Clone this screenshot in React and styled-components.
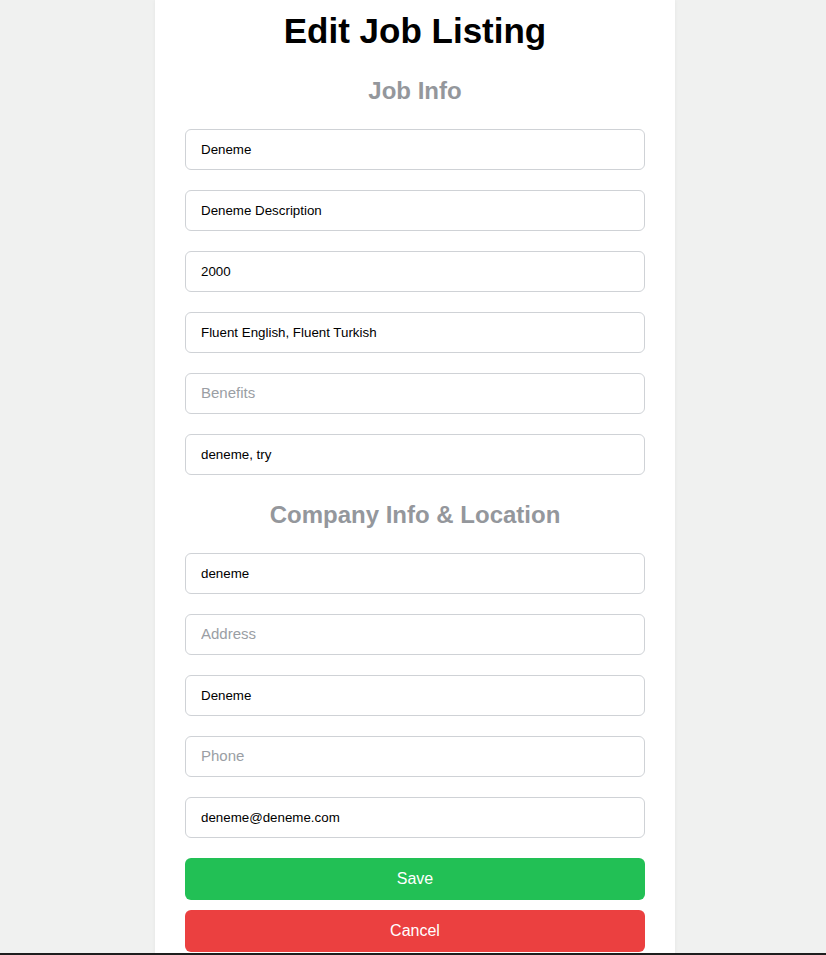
import React, { useState } from 'react';
import styled, { createGlobalStyle } from 'styled-components';

const GlobalStyle = createGlobalStyle`
  html, body {
    margin: 0;
    padding: 0;
    background: #f0f1f0;
    font-family: 'Liberation Sans', Arial, sans-serif;
  }
`;

const jobFields = [
  { name: 'title', placeholder: 'Job Title', value: 'Deneme' },
  { name: 'description', placeholder: 'Description', value: 'Deneme Description' },
  { name: 'salary', placeholder: 'Salary', value: '2000' },
  { name: 'requirements', placeholder: 'Requirements', value: 'Fluent English, Fluent Turkish' },
  { name: 'benefits', placeholder: 'Benefits', value: '' },
  { name: 'tags', placeholder: 'Tags', value: 'deneme, try' },
];

const companyFields = [
  { name: 'company', placeholder: 'Company Name', value: 'deneme' },
  { name: 'address', placeholder: 'Address', value: '' },
  { name: 'city', placeholder: 'City', value: 'Deneme' },
  { name: 'phone', placeholder: 'Phone', value: '' },
  { name: 'email', placeholder: 'Email', value: 'deneme@deneme.com' },
];

const App = () => {
  const [form, setForm] = useState(() =>
    [...jobFields, ...companyFields].reduce((acc, f) => ({ ...acc, [f.name]: f.value }), {})
  );

  const handleChange = (e) => {
    setForm({ ...form, [e.target.name]: e.target.value });
  };

  const renderField = (field) => (
    <Input
      key={field.name}
      name={field.name}
      placeholder={field.placeholder}
      value={form[field.name]}
      onChange={handleChange}
    />
  );

  return (
    <Screen>
      <GlobalStyle />
      <Page>
        <Card>
          <Title>Edit Job Listing</Title>
          <SectionTitle>Job Info</SectionTitle>
          {jobFields.map(renderField)}
          <SectionTitle $spaced>Company Info &amp; Location</SectionTitle>
          {companyFields.map(renderField)}
          <Actions>
            <Button type="button" $variant="save">Save</Button>
            <Button type="button" $variant="cancel">Cancel</Button>
          </Actions>
        </Card>
      </Page>
      <BottomBar />
    </Screen>
  );
};

export default App;

const Screen = styled.div`
  display: flex;
  flex-direction: column;
  height: 955px;
  overflow: hidden;
`;

const Page = styled.main`
  flex: 1;
  display: flex;
  justify-content: center;
  padding-left: 4px;
  overflow: hidden;
`;

const Card = styled.form`
  width: 520px;
  box-sizing: border-box;
  padding: 9px 30px 20px;
  background: #ffffff;
  box-shadow: 0 0 4px rgba(0, 0, 0, 0.05);
  display: flex;
  flex-direction: column;
  align-self: flex-start;
`;

const Title = styled.h1`
  margin: 0 0 25px;
  font-size: 35px;
  line-height: 43px;
  font-weight: 700;
  color: #000;
  text-align: center;
`;

const SectionTitle = styled.h2`
  margin: ${({ $spaced }) => ($spaced ? '6px' : '0')} 0 24px;
  font-size: 24px;
  line-height: 28px;
  font-weight: 700;
  color: #94979c;
  text-align: center;
`;

const Input = styled.input`
  box-sizing: border-box;
  width: 100%;
  height: 41px;
  margin: 0 0 20px;
  padding: 0 15px;
  border: 1px solid #cfd2d6;
  border-radius: 6px;
  font-family: 'Liberation Sans', Arial, sans-serif;
  font-size: 13.33px;
  color: #000;
  background: #fff;
  outline: none;

  &::placeholder {
    font-size: 15px;
    color: #9a9ea4;
  }
`;

const Actions = styled.div`
  display: flex;
  flex-direction: column;
  gap: 10px;
`;

const Button = styled.button`
  height: 42px;
  width: 100%;
  border: none;
  border-radius: 6px;
  font-family: 'Liberation Sans', Arial, sans-serif;
  font-size: 16px;
  color: #fff;
  cursor: pointer;
  background: ${({ $variant }) => ($variant === 'save' ? '#22c055' : '#eb4040')};
`;

const BottomBar = styled.div`
  height: 2px;
  background: #1e1e1e;
`;
